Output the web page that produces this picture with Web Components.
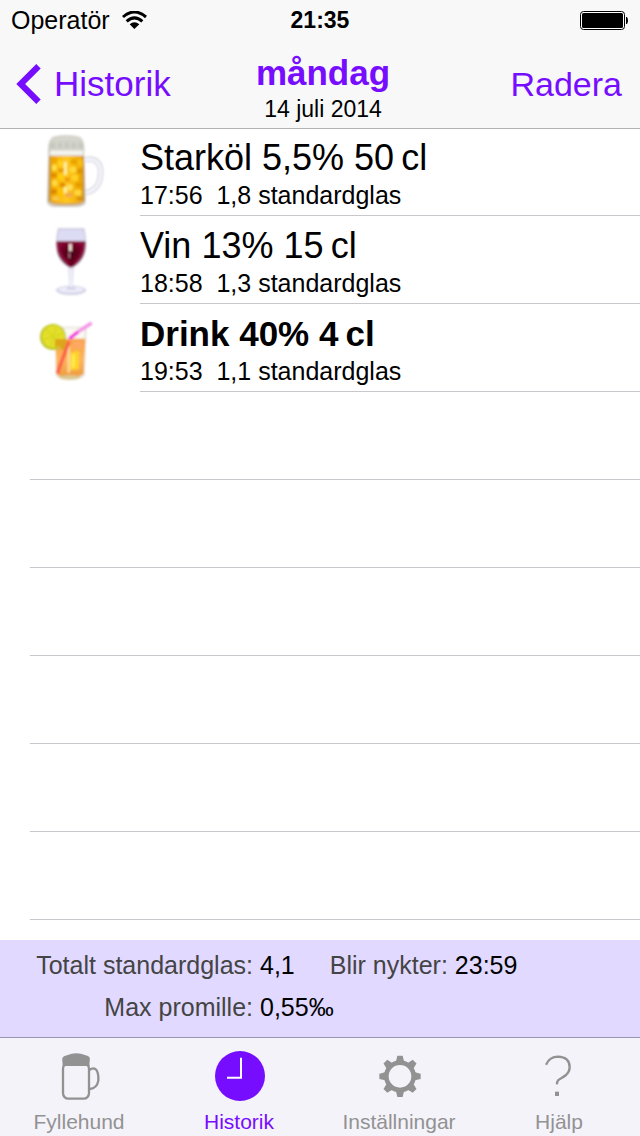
<!DOCTYPE html>
<html lang="sv">
<head>
<meta charset="utf-8">
<meta name="viewport" content="width=device-width, initial-scale=1">
<title>Historik</title>
<style>
  body { margin: 0; background: #fff; color: #000; font-family: "Liberation Sans", Arial, sans-serif; }
</style>
</head>
<body>
<history-page></history-page>

<template id="page-t">
  <style>
    :host { display: flex; flex-direction: column; min-height: 100vh; --tint: #770dff; --line: #c8c7cc; }
    header { background: #f8f8f8; box-shadow: 0 1px 0 #b2b2b2; position: relative; z-index: 1; }
    main { flex: 1; }
  </style>
  <header>
    <status-bar></status-bar>
    <nav-bar>
      <span slot="back">Historik</span>
      <span slot="title">måndag</span>
      <span slot="date">14 juli 2014</span>
      <span slot="action">Radera</span>
    </nav-bar>
  </header>
  <main role="list">
    <drink-row role="listitem" kind="beer"><span slot="name">Starköl 5,5% 50&#8201;cl</span><span slot="info">17:56&nbsp; 1,8 standardglas</span></drink-row>
    <drink-row role="listitem" kind="wine"><span slot="name">Vin 13% 15&#8201;cl</span><span slot="info">18:58&nbsp; 1,3 standardglas</span></drink-row>
    <drink-row role="listitem" kind="drink" strong><span slot="name">Drink 40% 4&#8201;cl</span><span slot="info">19:53&nbsp; 1,1 standardglas</span></drink-row>
    <empty-row></empty-row><empty-row></empty-row><empty-row></empty-row>
    <empty-row></empty-row><empty-row></empty-row><empty-row></empty-row>
  </main>
  <day-summary></day-summary>
  <tab-bar>
    <tab-item icon="mug">Fyllehund</tab-item>
    <tab-item icon="clock" active>Historik</tab-item>
    <tab-item icon="gear">Inställningar</tab-item>
    <tab-item icon="help">Hjälp</tab-item>
  </tab-bar>
</template>

<template id="status-t">
  <style>
    :host { display: grid; grid-template-columns: 1fr auto 1fr; align-items: center; height: 40px; padding: 0 11px; font-size: 25px; line-height: 28px; }
    .carrier { display: flex; align-items: center; gap: 12px; }
    .clock { font-size: 23px; font-weight: bold; line-height: 30px; }
    .battery { justify-self: end; }
    svg { display: block; }
  </style>
  <div class="carrier">Operatör
    <svg width="25" height="18" viewBox="0 0 75 54" aria-label="Wi-Fi"><path d="M3 18Q37-12 72 18" fill="none" stroke="#000" stroke-width="9"/><path d="M14 31Q37 10 61 31" fill="none" stroke="#000" stroke-width="9"/><path d="M23 40Q37 28 52 40L37 54Z"/></svg>
  </div>
  <span class="clock">21:35</span>
  <svg class="battery" width="50" height="20" viewBox="0 0 50 20" aria-label="Batteri"><rect x="1.5" y="1.5" width="44" height="18" rx="3" fill="#fff" stroke="#000"/><rect x="3" y="3" width="41" height="15" rx="1.5"/><path d="M47 7h1q2 3.500 0 7h-1z"/></svg>
</template>

<template id="nav-t">
  <style>
    :host { display: grid; grid-template-columns: 1fr auto 1fr; align-items: center; height: 88px; padding: 0 10px 0 16px; }
    a, button { color: var(--tint); line-height: 40px; }
    a { display: flex; align-items: center; gap: 13px; text-decoration: none; font-size: 35px; }
    button { justify-self: end; border: 0; padding: 0 8px; background: none; font-family: inherit; font-size: 34px; }
    .center { padding-top: 8px; text-align: center; }
    h1 { margin: 0; color: var(--tint); font-size: 35px; line-height: 42px; }
    p { margin: 0; font-size: 23px; line-height: 30px; }
  </style>
  <a href="#historik"><svg width="25" height="40" viewBox="0 0 25 40" aria-hidden="true"><path d="M22.500 2.200L4.700 20L22.500 37.800" fill="none" stroke="currentColor" stroke-width="6.200"/></svg><slot name="back"></slot></a>
  <div class="center"><h1><slot name="title"></slot></h1><p><slot name="date"></slot></p></div>
  <button type="button"><slot name="action"></slot></button>
</template>

<template id="row-t">
  <style>
    :host { display: flex; height: 88px; padding-left: 30px; gap: 20px; }
    svg { flex: none; display: block; }
    .text { flex: 1; box-sizing: border-box; padding-top: 9px; border-bottom: 1px solid var(--line); white-space: nowrap; }
    .name { font-size: 36px; line-height: 42px; }
    :host([strong]) .name { font-size: 35px; font-weight: bold; }
    .info { font-size: 25px; line-height: 32px; }
  </style>
  <svg width="90" height="88" viewBox="0 -6 270 264" aria-hidden="true"></svg>
  <div class="text"><div class="name"><slot name="name"></slot></div><div class="info"><slot name="info"></slot></div></div>
</template>

<template id="summary-t">
  <style>
    :host { display: block; background: #e1d9ff; padding: 4px 33px 9px; font-size: 25px; line-height: 42px; }
    dl { display: flex; margin: 0; white-space: nowrap; }
    dl div { display: flex; gap: 7px; }
    dl div:first-child dt { width: 220px; text-align: right; }
    dl div + div { margin-left: 35px; }
    dt { color: #444; }
    dd { margin: 0; }
  </style>
  <dl><div><dt>Totalt standardglas:</dt><dd>4,1</dd></div><div><dt>Blir nykter:</dt><dd>23:59</dd></div></dl>
  <dl><div><dt>Max promille:</dt><dd>0,55‰</dd></div></dl>
</template>

<template id="tabs-t">
  <style>
    :host { display: block; background: #f5f3fa; border-top: 1px solid #9a94b0; }
    nav { display: grid; grid-template-columns: repeat(4, 1fr); }
  </style>
  <nav><slot></slot></nav>
</template>

<template id="tab-t">
  <style>
    :host { display: block; color: #929292; }
    :host([active]) { color: var(--tint); }
    a { display: flex; flex-direction: column; align-items: center; color: inherit; text-decoration: none; font-size: 21px; line-height: 28px; padding-right: 2px; }
    svg { display: block; }
  </style>
  <a href="#"><svg width="60" height="70" viewBox="-3 -6 180 210" aria-hidden="true"></svg><slot></slot></a>
</template>

<script>
  const tooth = 'M-8-62H8L12-45H-12Z';
  const teeth = [0, 45, 90, 135, 180, 225, 270, 315]
    .map(a => `<path d="${tooth}" transform="translate(90 109) rotate(${a})" fill="currentColor"/>`).join('');

  // Small facets of light and shade inside the beer glass: x, y, width, height, colour.
  const facets = [
    [64,84,16,12,'#e9a400'],[84,92,14,18,'#ffd21a'],[122,88,18,14,'#eaa200'],[144,88,14,22,'#f7be10'],
    [66,104,14,18,'#ffe04a'],[86,116,20,10,'#e59a00'],[120,110,18,18,'#ffd93a'],[142,118,16,12,'#dc9000'],
    [62,130,18,12,'#dd8b00'],[84,132,16,18,'#ffcf10'],[104,142,16,14,'#f0a010'],[126,134,18,18,'#ffd226'],
    [66,150,16,18,'#ffd93c'],[90,158,16,14,'#e18c00'],[112,164,16,16,'#ffe05a'],[136,158,20,12,'#e39a00'],
    [62,178,18,14,'#db8700'],[86,178,16,18,'#ffc400'],[106,188,22,14,'#f3a948'],[134,180,20,16,'#ffd83c'],[66,200,22,10,'#f9c94a'],[140,202,18,8,'#cf8c18']
  ].map(([x,y,w,h,c]) => `<rect x="${x}" y="${y}" width="${w}" height="${h}" rx="4" fill="${c}"/>`).join('');

  const pictures = {
    beer: `<defs><linearGradient id="foam" x2="0" y2="1"><stop offset="0" stop-color="#dcdcd2"/><stop offset=".5" stop-color="#c2c4bb"/><stop offset="1" stop-color="#f0efe8"/></linearGradient>
      <linearGradient id="body"><stop offset="0" stop-color="#b98e40"/><stop offset=".12" stop-color="#f5ae00"/><stop offset=".5" stop-color="#ffc81c"/><stop offset=".9" stop-color="#efa800"/><stop offset="1" stop-color="#b08845"/></linearGradient>
      <filter id="soft" x="-20%" y="-20%" width="140%" height="140%"><feGaussianBlur stdDeviation="2.500"/></filter></defs>
      <g filter="url(#soft)"><path d="M164 89Q212 80 212 128Q211 180 164 189" fill="none" stroke="#cfcfdb" stroke-width="16"/><path d="M164 89Q212 80 212 128Q211 180 164 189" fill="none" stroke="#f7f7fd" stroke-width="9"/>
      <path d="M55 76Q51 30 70 20Q108 12 148 20Q167 28 162 76L167 218Q162 229 140 231H76Q56 230 51 218Z" fill="#cfcbc3"/>
      <path d="M60 76V42Q60 28 72 24Q108 18 146 24Q158 28 159 42V76Z" fill="url(#foam)"/><path d="M80 32V58M100 29V56M121 30V56M141 33V56" stroke="#d2d3cb" stroke-width="9"/><path d="M62 67H158" stroke="#f6f5f0" stroke-width="10"/>
      <path d="M57 78H162L164 212Q158 220 140 221H76Q60 220 55 212Z" fill="url(#body)"/>${facets}
      <path d="M106 96V134M106 170V190" stroke="#fff0a0" stroke-width="9"/><path d="M64 218Q108 228 156 218" fill="none" stroke="#d6a457" stroke-width="6"/></g>`,
    wine: `<defs><filter id="soft" x="-20%" y="-20%" width="140%" height="140%"><feGaussianBlur stdDeviation="3"/></filter>
      <radialGradient id="red"><stop offset="0" stop-color="#4a0018"/><stop offset=".6" stop-color="#65001f"/><stop offset="1" stop-color="#850735"/></radialGradient></defs>
      <g filter="url(#soft)"><ellipse cx="123" cy="217" rx="45" ry="14" fill="#d0d0e4"/><ellipse cx="123" cy="215" rx="38" ry="9" fill="#ededfb"/>
      <path d="M115 145L118 200L108 215H138L128 200L131 145Z" fill="#d4d3e8"/><path d="M123 150V207" stroke="#f7f7ff" stroke-width="6"/>
      <path d="M84 31H163Q174 82 163 112Q150 142 123 150Q96 142 83 112Q73 76 84 31Z" fill="#c7c6da"/>
      <path d="M88 35H159Q165 50 165 68H82Q83 50 88 35Z" fill="#dddcf5"/>
      <path d="M80 70H166Q168 98 158 116Q146 138 123 149Q100 138 88 116Q78 98 80 70Z" fill="url(#red)"/>
      <path d="M84 84Q94 122 117 135M162 84Q154 118 134 134" stroke="#930b42" stroke-width="6" fill="none"/><path d="M121 77V99" stroke="#f4e5da" stroke-width="9"/><path d="M118 104V120" stroke="#a87a83" stroke-width="5"/></g>`,
    drink: `<defs><filter id="soft" x="-20%" y="-20%" width="140%" height="140%"><feGaussianBlur stdDeviation="3"/></filter>
      <linearGradient id="juice" x2="0" y2="1"><stop offset="0" stop-color="#f7a33c"/><stop offset=".55" stop-color="#ffb45c"/><stop offset="1" stop-color="#ed9a3c"/></linearGradient></defs>
      <g filter="url(#soft)"><path d="M76 62H170L164 208Q158 221 120 222Q82 221 77 208Z" fill="#e5e3dd"/><path d="M102 67H163V98H102Z" fill="#fbfaf2"/>
      <path d="M76 98H166L161 204Q152 213 120 213Q84 213 80 204Z" fill="url(#juice)"/><ellipse cx="119" cy="214" rx="32" ry="7" fill="#dcc78e"/>
      <circle cx="69" cy="93" r="39" fill="#b9c226"/><circle cx="70" cy="92" r="34" fill="#e3df2a"/><path d="M70 92L47 70M70 92L78 62M70 92L99 84M70 92L91 117M70 92L63 122M70 92L39 100" stroke="#d8d620" stroke-width="4"/>
      <path d="M75 99H110V132H94Q92 112 75 126Z" fill="#dea41e"/><path d="M122 140L147 134V190L119 193Z" fill="#ffd329"/><path d="M130 145V184" stroke="#fff052" stroke-width="8"/><path d="M116 120V200" stroke="#ffe3a9" stroke-width="6"/><path d="M128 106H158V126H128Z" fill="#ffa765"/>
      <path d="M117 106L82 202" stroke="#fb5d4b" stroke-width="10"/><path d="M118 98L145 77" stroke="#f51fe0" stroke-width="10"/><path d="M145 77L185 51" stroke="#f58fe6" stroke-width="10"/></g>`
  };

  const icons = {
    mug: `<rect x="39" y="70" width="78" height="106" rx="16" fill="none" stroke="currentColor" stroke-width="7"/><path d="M38 78Q38 71 37 64Q34 48 51 46Q79 34 107 46Q123 48 119 64Q118 71 119 78Z" fill="currentColor"/><path d="M119 91Q121 85 132 85Q143 87 145 110V122Q141 145 119 147" fill="none" stroke="currentColor" stroke-width="7"/>`,
    clock: `<circle cx="90" cy="108" r="75" fill="currentColor"/><path d="M93 53V113H51" fill="none" stroke="#fff" stroke-width="6"/>`,
    gear: `<circle cx="90" cy="109" r="41" fill="none" stroke="currentColor" stroke-width="14"/>${teeth}`,
    help: `<path d="M48 74Q59 50 84 50Q119 51 119 82Q119 95 108 105C94 117 80 116 81 133" fill="none" stroke="currentColor" stroke-width="7"/><rect x="75" y="155" width="12" height="13" fill="currentColor"/>`
  };

  function define(name, templateId, setup) {
    customElements.define(name, class extends HTMLElement {
      constructor() {
        super();
        this.attachShadow({ mode: 'open' }).append(document.getElementById(templateId).content.cloneNode(true));
      }
      connectedCallback() { if (setup) setup(this, this.shadowRoot); }
    });
  }

  customElements.define('empty-row', class extends HTMLElement {
    constructor() {
      super();
      this.attachShadow({ mode: 'open' }).innerHTML =
        '<style>:host{display:block;box-sizing:border-box;height:88px;margin-left:30px;border-bottom:1px solid var(--line)}</style>';
    }
  });
  define('status-bar', 'status-t');
  define('nav-bar', 'nav-t');
  define('drink-row', 'row-t', (el, root) => { root.querySelector('svg').innerHTML = pictures[el.getAttribute('kind')]; });
  define('day-summary', 'summary-t');
  define('tab-item', 'tab-t', (el, root) => {
    root.querySelector('svg').innerHTML = icons[el.getAttribute('icon')];
    if (el.hasAttribute('active')) root.querySelector('a').setAttribute('aria-current', 'page');
  });
  define('tab-bar', 'tabs-t');
  define('history-page', 'page-t');
</script>
</body>
</html>
